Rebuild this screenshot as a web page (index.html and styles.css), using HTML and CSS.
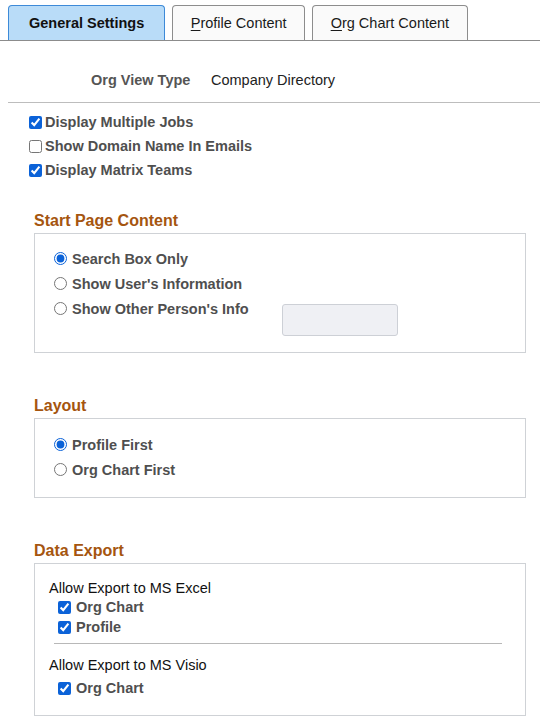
FILE: index.html
```html
<!DOCTYPE html>
<html>
<head>
<meta charset="utf-8">
<link rel="stylesheet" href="styles.css">
</head>
<body>
<div class="tabs">
  <div class="tab tab-active">General Settings</div>
  <div class="tab"><span class="ul">P</span>rofile Content</div>
  <div class="tab"><span class="ul">O</span>rg Chart Content</div>
</div>

<div class="viewtype">
  <span class="vt-label">Org View Type</span>
  <span class="vt-value">Company Directory</span>
</div>
<div class="rule"></div>

<div class="checks">
  <label class="row"><input type="checkbox" checked><span>Display Multiple Jobs</span></label>
  <label class="row"><input type="checkbox"><span>Show Domain Name In Emails</span></label>
  <label class="row"><input type="checkbox" checked><span>Display Matrix Teams</span></label>
</div>

<div class="section">
  <h2 class="sec-title">Start Page Content</h2>
  <div class="box box-start">
    <label class="rrow"><input type="radio" name="sp" checked><span>Search Box Only</span></label>
    <label class="rrow"><input type="radio" name="sp"><span>Show User's Information</span></label>
    <div class="rrow rrow-other">
      <label class="rlabel"><input type="radio" name="sp"><span>Show Other Person's Info</span></label>
      <div class="field"></div>
    </div>
  </div>
</div>

<div class="section">
  <h2 class="sec-title">Layout</h2>
  <div class="box box-layout">
    <label class="rrow"><input type="radio" name="ly" checked><span>Profile First</span></label>
    <label class="rrow"><input type="radio" name="ly"><span>Org Chart First</span></label>
  </div>
</div>

<div class="section">
  <h2 class="sec-title">Data Export</h2>
  <div class="box box-export">
    <div class="ex-title">Allow Export to MS Excel</div>
    <label class="erow erow-first"><input type="checkbox" checked><span>Org Chart</span></label>
    <label class="erow"><input type="checkbox" checked><span>Profile</span></label>
    <div class="ex-sep"></div>
    <div class="ex-title ex-title-2">Allow Export to MS Visio</div>
    <label class="erow erow-visio"><input type="checkbox" checked><span>Org Chart</span></label>
  </div>
</div>
</body>
</html>
```

FILE: styles.css
```css
* { box-sizing: border-box; }
html, body { margin: 0; padding: 0; background: #fff; }
body {
  font-family: "Liberation Sans", Arial, sans-serif;
  font-size: 14.5px;
  color: #222;
  width: 540px;
}
input[type="checkbox"], input[type="radio"] {
  width: 13px;
  height: 13px;
  margin: 0;
  accent-color: #0b62d8;
  flex: none;
}

.tabs {
  display: flex;
  gap: 7px;
  padding: 5px 0 0 8px;
  border-bottom: 1px solid #8c8c8c;
  height: 41px;
}
.tab {
  height: 35px;
  padding: 0 17.5px;
  display: flex;
  align-items: center;
  border: 1px solid #8d8d8d;
  border-bottom: none;
  border-radius: 4px 4px 0 0;
  background: #fafafa;
  color: #1a1a1a;
}
.tab-active {
  padding: 0 20px;
  background: #b9dcf8;
  border-color: #3d8ad8;
  font-weight: bold;
  color: #111;
}
.ul { text-decoration: underline; text-underline-offset: 2px; }

.viewtype {
  display: flex;
  margin-top: 29px;
  line-height: 20px;
  padding-left: 91px;
}
.vt-label { font-weight: bold; color: #555; width: 120px; }
.vt-value { color: #222; }
.rule {
  margin: 12px 0 0 8px;
  height: 1px;
  background: #bdbdbd;
}

.checks { padding: 7px 0 0 29px; }
.row {
  display: flex;
  align-items: center;
  gap: 3px;
  height: 24px;
  font-weight: bold;
  color: #4f4f4f;
}

.section { margin: 29px 0 0 34px; width: 492px; }
.sec-title {
  margin: 0 0 2px;
  font-size: 16px;
  line-height: 20px;
  font-weight: bold;
  color: #a5550f;
}
.box {
  border: 1px solid #cfd2d6;
}
.box-start { height: 120px; padding: 12px 0 0 19px; }
.box-layout { height: 80px; padding: 13px 0 0 19px; }
.section + .section { margin-top: 43px; }

.rrow, .rlabel {
  display: flex;
  align-items: center;
  gap: 5px;
  height: 25px;
  font-weight: bold;
  color: #4f4f4f;
}
.rrow-other { align-items: flex-start; height: auto; }
.rlabel { height: 25px; }
.field {
  margin: 8px 0 0 28px;
  width: 116px;
  height: 32px;
  border: 1px solid #cdd0d6;
  border-radius: 3px;
  background: #eff0f4;
}

.box-export { height: 153px; padding: 14px 0 0 14px; }
.ex-title { line-height: 20px; color: #111; }
.ex-title-2 { margin-top: 11px; }
.erow {
  display: flex;
  align-items: center;
  gap: 5px;
  height: 20px;
  padding-left: 9px;
  font-weight: bold;
  color: #4f4f4f;
}
.erow-first { margin-top: -1px; }
.erow-visio { margin-top: 3px; }
.ex-sep {
  margin: 6px 23px 0 5px;
  height: 1px;
  background: #b8b8b8;
}
```
